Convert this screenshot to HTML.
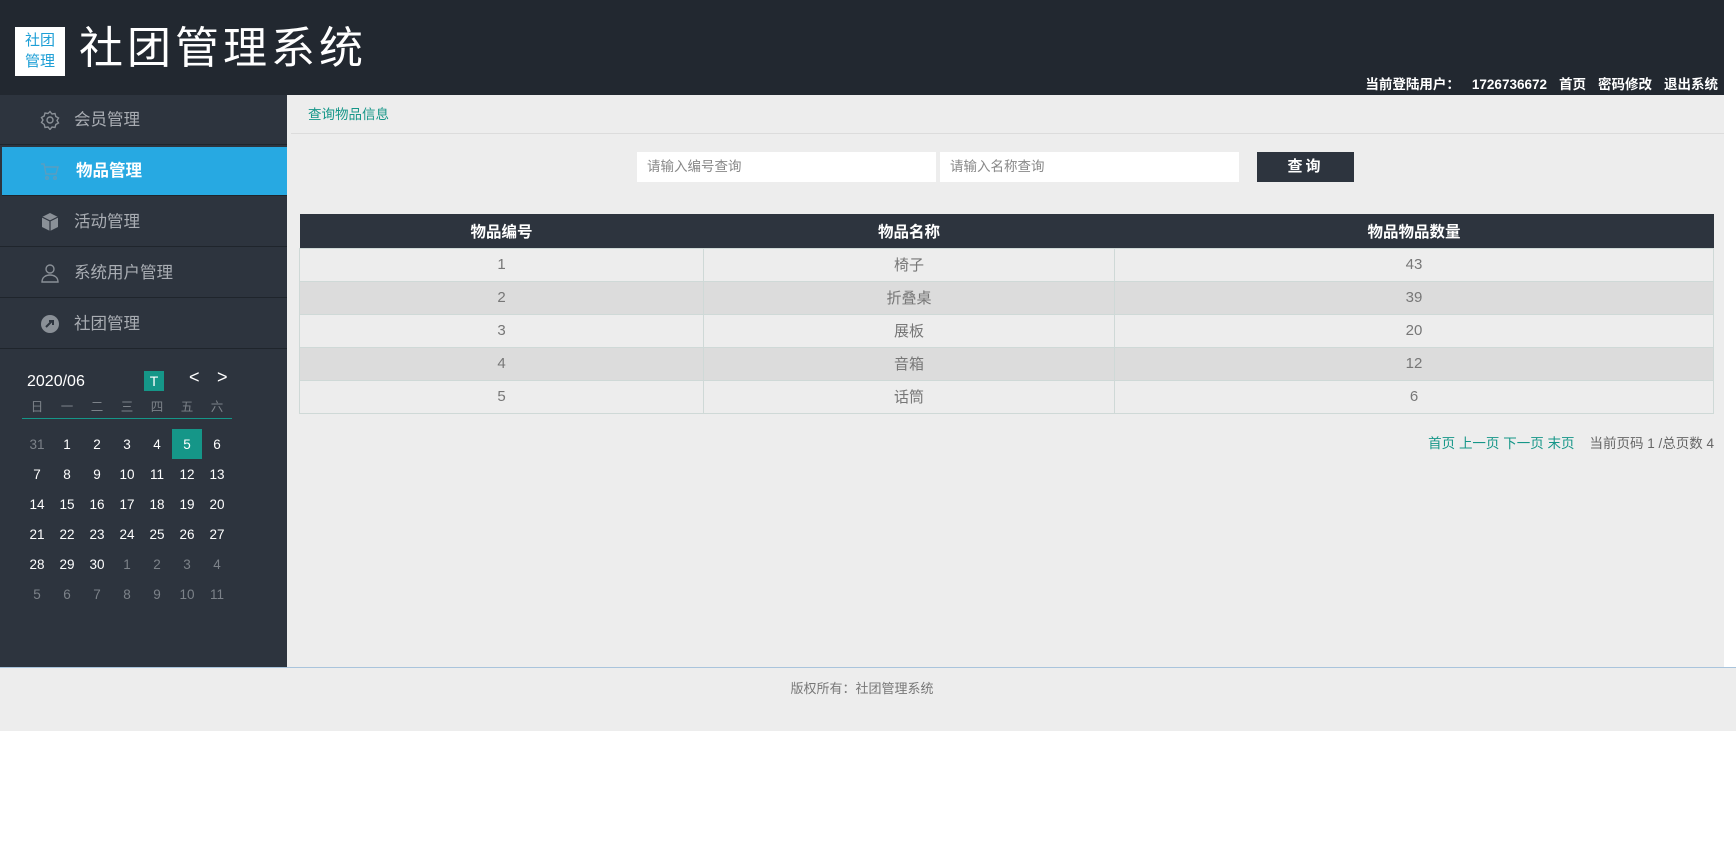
<!DOCTYPE html>
<html><head><meta charset="utf-8"><style>
*{margin:0;padding:0;box-sizing:border-box}
body{width:1736px;height:859px;background:#fff;font-family:"Liberation Sans","Noto Sans CJK SC",sans-serif;position:relative;overflow:hidden}
.hdr{position:absolute;left:0;top:0;width:1724px;height:95px;background:#222830}
.logo{position:absolute;left:15px;top:27px;width:50px;height:49px;background:#fff;color:#1e9fd6;font-size:15px;line-height:21px;text-align:center;padding-top:3px}
.title{position:absolute;left:79px;top:21px;color:#fff;font-size:44px;letter-spacing:4px;line-height:56px}
.user{position:absolute;right:6px;top:73px;color:#fff;font-size:13.5px;font-weight:bold}
.user span{margin-left:12px}
.side{position:absolute;left:0;top:95px;width:287px;height:572px;background:#2d343e}
.mi{position:absolute;left:0;width:287px;height:50px;background:#2d343e;border-bottom:1px solid #1f252c;color:#a9adb3;font-size:16.5px;line-height:50px;padding-left:74px}
.mi.act{background:#27a9e2;color:#fff;font-weight:bold;left:2px}
.ic{position:absolute;left:40px;top:15px;width:20px;height:20px}
.c{position:absolute;width:30px;text-align:center;font-size:13.5px;color:#fff}
.c.g{color:#7c8289}
.main{position:absolute;left:287px;top:95px;width:1437px;height:572px;background:#ededed}
.bc{position:absolute;left:21px;top:8px;color:#159688;font-size:13.5px}
.bline{position:absolute;left:4px;right:0;top:38px;height:1px;background:#dcdcdc}
.inp{position:absolute;top:57px;height:30px;width:299px;background:#fff;font-size:13.5px;color:#888;line-height:30px;padding-left:10px}
.btn{position:absolute;left:970px;top:57px;width:97px;height:30px;background:#2d343e;color:#fff;font-weight:bold;font-size:15px;text-align:center;line-height:30px;letter-spacing:3px}
table{position:absolute;left:12px;top:119px;width:1415px;border-collapse:collapse;font-size:15px}
th{background:#2d343e;color:#fff;height:34px;font-weight:bold;font-size:15.5px}
td{height:33px;text-align:center;color:#777;border:1px solid #cfd9d7}
tr.e td{background:#dcdcdc}
tr.o td{background:#ededed}
.pg{position:absolute;right:10px;top:337px;font-size:13.5px;color:#666}
.pg a{color:#159688;text-decoration:none}
.ft{position:absolute;left:0;top:667px;width:1736px;height:64px;background:#ededed;border-top:1px solid #a9c4dc;text-align:center;font-size:13px;color:#777;padding-top:10px}
.ft div{width:1724px}
</style></head><body>
<div class="hdr">
<div class="logo">社团<br>管理</div>
<div class="title">社团管理系统</div>
<div class="user">当前登陆用户：<span>1726736672</span><span>首页</span><span>密码修改</span><span>退出系统</span></div>
</div>
<div class="side">
<div class="mi" style="top:0">
<svg class="ic" viewBox="0 0 20 20" fill="none" stroke="#8a9097" stroke-width="1.4"><path d="M10 1.5l2 2.5 3-.5.8 3 2.7 1.5-1.5 2.5 1.5 2.5-2.7 1.5-.8 3-3-.5-2 2.5-2-2.5-3 .5-.8-3L1.5 12.5 3 10 1.5 7.5 4.2 6l.8-3 3 .5z"/><circle cx="10" cy="10" r="3"/></svg>会员管理</div>
<div class="mi act" style="top:52px;height:49px;line-height:49px;width:285px">
<svg class="ic" style="left:38px;top:14px" viewBox="0 0 20 20" fill="none" stroke="#5a9ec0" stroke-width="1.4"><path d="M1 3h3l2 10h10l2-7H5"/><circle cx="7" cy="17" r="1.3"/><circle cx="15" cy="17" r="1.3"/></svg>物品管理</div>
<div class="mi" style="top:102px">
<svg class="ic" viewBox="0 0 20 20"><path d="M10 1l8 4v10l-8 4-8-4V5z" fill="#8a9097"/><path d="M2 5l8 4 8-4M10 9v10" stroke="#2d343e" stroke-width="1.2" fill="none"/></svg>活动管理</div>
<div class="mi" style="top:153px">
<svg class="ic" viewBox="0 0 20 20" fill="none" stroke="#8a9097" stroke-width="1.4"><circle cx="10" cy="6" r="4"/><path d="M2 19c0-5 4-7 8-7s8 2 8 7z"/></svg>系统用户管理</div>
<div class="mi" style="top:204px">
<svg class="ic" viewBox="0 0 20 20"><circle cx="10" cy="10" r="9" fill="#8a9097"/><path d="M6 13l6-6M9 7h4v4" stroke="#2d343e" stroke-width="2" fill="none"/></svg>社团管理</div>
</div>
<div style="position:absolute;left:27px;top:373px;color:#fff;font-size:16px">2020/06</div>
<div style="position:absolute;left:144px;top:371px;width:20px;height:20px;background:#159688;color:#fff;font-size:14px;text-align:center;line-height:20px">T</div>
<div style="position:absolute;left:189px;top:367px;color:#fff;font-size:18px">&lt;</div>
<div style="position:absolute;left:217px;top:367px;color:#fff;font-size:18px">&gt;</div>
<div style="position:absolute;left:22px;top:418px;width:210px;height:1px;background:#159688"></div>
<div style="position:absolute;left:172px;top:429px;width:30px;height:30px;background:#159688"></div>
<div id="cal"></div>
<script>
var h="";var hd=["日","一","二","三","四","五","六"];
for(var i=0;i<7;i++)h+='<div class="c g" style="left:'+(22+30*i)+'px;top:396px;font-size:12.5px">'+hd[i]+'</div>';
var d=[31];for(var i=1;i<=30;i++)d.push(i);for(var i=1;i<=11;i++)d.push(i);
for(var k=0;k<42;k++){var r=Math.floor(k/7),c=k%7;var g=(k==0||k>30);h+='<div class="c'+(g?' g':'')+'" style="left:'+(22+30*c)+'px;top:'+(437+30*r)+'px">'+d[k]+'</div>';}
document.getElementById("cal").innerHTML=h;
</script>
<div class="main">
<div class="bc">查询物品信息</div>
<div class="bline"></div>
<div class="inp" style="left:350px">请输入编号查询</div>
<div class="inp" style="left:653px">请输入名称查询</div>
<div class="btn">查询</div>
<table>
<tr><th style="width:404px">物品编号</th><th style="width:411px">物品名称</th><th>物品物品数量</th></tr>
<tr class="o"><td>1</td><td>椅子</td><td>43</td></tr>
<tr class="e"><td>2</td><td>折叠桌</td><td>39</td></tr>
<tr class="o"><td>3</td><td>展板</td><td>20</td></tr>
<tr class="e"><td>4</td><td>音箱</td><td>12</td></tr>
<tr class="o"><td>5</td><td>话筒</td><td>6</td></tr>
</table>
<div class="pg"><a>首页</a> <a>上一页</a> <a>下一页</a> <a>末页</a> &nbsp;&nbsp; 当前页码 1 /总页数 4</div>
</div>
<div class="ft"><div>版权所有：社团管理系统</div></div>
</body></html>
